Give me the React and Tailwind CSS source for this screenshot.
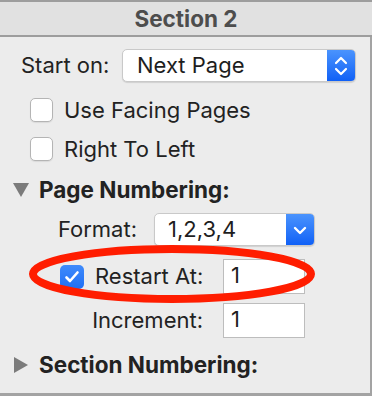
import React from "react";

const font = { fontFamily: "Inter, 'Liberation Sans', sans-serif" };

function Stepper() {
  return (
    <svg width="14" height="22" viewBox="0 0 14 22" fill="none" stroke="white" strokeWidth="2.2" strokeLinecap="round" strokeLinejoin="round">
      <path d="M2 8 L7 3 L12 8" />
      <path d="M2 14 L7 19 L12 14" />
    </svg>
  );
}

function ChevronDown() {
  return (
    <svg width="14" height="10" viewBox="0 0 14 10" fill="none" stroke="white" strokeWidth="2.4" strokeLinecap="round" strokeLinejoin="round">
      <path d="M2 3 L7 8 L12 3" />
    </svg>
  );
}

function PopUp({ value, width, textPad, children }) {
  return (
    <div
      className="flex h-[33px] rounded-[5px] bg-white border border-[#c9c9c9] shadow-[0_1px_1px_rgba(0,0,0,0.12)] overflow-hidden"
      style={{ width }}
    >
      <div className="flex-1 flex items-center text-[22px] text-[#1e1e1e]" style={{ paddingLeft: textPad }}>
        {value}
      </div>
      <div className="w-[28px] flex items-center justify-center bg-gradient-to-b from-[#4a93fd] to-[#0f60f6]">
        {children}
      </div>
    </div>
  );
}

function Checkbox({ checked }) {
  if (checked) {
    return (
      <div className="w-[24px] h-[24px] rounded-[5px] bg-gradient-to-b from-[#3f8bfb] to-[#1f6ef5] flex items-center justify-center">
        <svg width="16" height="14" viewBox="0 0 16 14" fill="none" stroke="white" strokeWidth="2.6" strokeLinecap="round" strokeLinejoin="round">
          <path d="M2.5 7.5 L6 11 L13.5 2.5" />
        </svg>
      </div>
    );
  }
  return (
    <div className="w-[23px] h-[24px] rounded-[5px] bg-white border border-[#b4b4b4] shadow-[0_1px_1px_rgba(0,0,0,0.08)]" />
  );
}

function NumField({ value }) {
  return (
    <div className="w-[82px] h-[35px] bg-white border border-[#bdbdbd] flex items-end pb-[1px] pl-[7px] text-[22px] text-[#1e1e1e]">
      {value}
    </div>
  );
}

export default function App() {
  return (
    <div className="w-[372px] h-[396px] bg-[#ececec] flex flex-col" style={font}>
      <div className="h-[37px] border-t-2 border-b-2 border-[#9d9d9d] bg-[#e1e1e1] flex items-center justify-center">
        <span className="text-[22.5px] font-bold text-[#4d4d4d]">Section 2</span>
      </div>

      <div className="relative flex-1 flex flex-col border-r-2 border-b-[3px] border-[#a3a3a3] text-[#222]">
        <div className="mt-[12px] h-[33px] flex items-center">
          <span className="w-[122px] pl-[21px] text-[22px]">Start on:</span>
          <PopUp value="Next Page" width={234} textPad={14}>
            <Stepper />
          </PopUp>
        </div>

        <div className="mt-[16px] h-[24px] flex items-center pl-[30px] gap-[11px]">
          <Checkbox />
          <span className="text-[22px]">Use Facing Pages</span>
        </div>

        <div className="mt-[15px] h-[24px] flex items-center pl-[30px] gap-[11px]">
          <Checkbox />
          <span className="text-[22px]">Right To Left</span>
        </div>

        <div className="mt-[17px] h-[24px] flex items-center pl-[13px] gap-[10px]">
          <svg width="16" height="14" viewBox="0 0 16 14">
            <path d="M0 0 L16 0 L8 14 Z" fill="#7b7b7b" />
          </svg>
          <span className="text-[22.5px] font-bold text-[#222]">Page Numbering:</span>
        </div>

        <div className="mt-[11px] h-[33px] flex items-center">
          <span className="w-[154px] pr-[17px] text-right text-[22px]">Format:</span>
          <PopUp value="1,2,3,4" width={161} textPad={13}>
            <ChevronDown />
          </PopUp>
        </div>

        <div className="mt-[13px] h-[35px] flex items-center">
          <div className="w-[223px] flex items-center pl-[60px] gap-[11px]">
            <Checkbox checked />
            <span className="text-[22px]">Restart At:</span>
          </div>
          <NumField value="1" />
        </div>

        <div className="mt-[9px] h-[35px] flex items-center">
          <span className="w-[223px] pr-[20px] text-right text-[22px]">Increment:</span>
          <NumField value="1" />
        </div>

        <div className="mt-[15px] h-[24px] flex items-center pl-[14px] gap-[11px]">
          <svg width="14" height="16" viewBox="0 0 14 16">
            <path d="M0 0 L14 8 L0 16 Z" fill="#7b7b7b" />
          </svg>
          <span className="text-[22.5px] font-bold text-[#222]">Section Numbering:</span>
        </div>

        <svg className="absolute left-0 top-0 pointer-events-none" width="372" height="359">
          <ellipse cx="172" cy="237" rx="139" ry="25" fill="none" stroke="#ff1d00" strokeWidth="8" />
        </svg>
      </div>
    </div>
  );
}
